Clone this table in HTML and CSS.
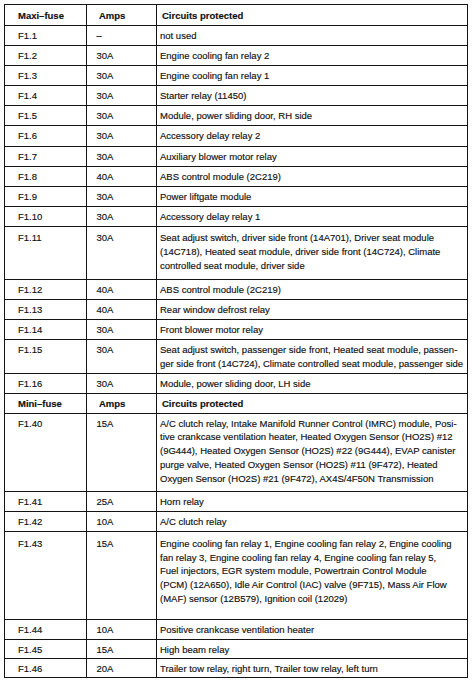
FILE: index.html
```html
<!DOCTYPE html>
<html>
<head>
<meta charset="utf-8">
<link rel="stylesheet" href="styles.css">
</head>
<body>
<table class="fuses">
  <colgroup>
    <col class="c-fuse">
    <col class="c-amps">
    <col class="c-circ">
  </colgroup>
  <tbody>
    <tr class="head"><td>Maxi–fuse</td><td>Amps</td><td>Circuits protected</td></tr>
    <tr><td>F1.1</td><td>–</td><td>not used</td></tr>
    <tr><td>F1.2</td><td>30A</td><td>Engine cooling fan relay 2</td></tr>
    <tr><td>F1.3</td><td>30A</td><td>Engine cooling fan relay 1</td></tr>
    <tr><td>F1.4</td><td>30A</td><td>Starter relay (11450)</td></tr>
    <tr><td>F1.5</td><td>30A</td><td>Module, power sliding door, RH side</td></tr>
    <tr><td>F1.6</td><td>30A</td><td>Accessory delay relay 2</td></tr>
    <tr><td>F1.7</td><td>30A</td><td>Auxiliary blower motor relay</td></tr>
    <tr><td>F1.8</td><td>40A</td><td>ABS control module (2C219)</td></tr>
    <tr><td>F1.9</td><td>30A</td><td>Power liftgate module</td></tr>
    <tr><td>F1.10</td><td>30A</td><td>Accessory delay relay 1</td></tr>
    <tr class="x3"><td>F1.11</td><td>30A</td><td>Seat adjust switch, driver side front (14A701), Driver seat module<br>(14C718), Heated seat module, driver side front (14C724), Climate<br>controlled seat module, driver side</td></tr>
    <tr><td>F1.12</td><td>40A</td><td>ABS control module (2C219)</td></tr>
    <tr><td>F1.13</td><td>40A</td><td>Rear window defrost relay</td></tr>
    <tr><td>F1.14</td><td>30A</td><td>Front blower motor relay</td></tr>
    <tr><td>F1.15</td><td>30A</td><td>Seat adjust switch, passenger side front, Heated seat module, passen-<br>ger side front (14C724), Climate controlled seat module, passenger side</td></tr>
    <tr><td>F1.16</td><td>30A</td><td>Module, power sliding door, LH side</td></tr>
    <tr class="head sub"><td>Mini–fuse</td><td>Amps</td><td>Circuits protected</td></tr>
    <tr class="x5a"><td>F1.40</td><td>15A</td><td>A/C clutch relay, Intake Manifold Runner Control (IMRC) module, Posi-<br>tive crankcase ventilation heater, Heated Oxygen Sensor (HO2S) #12<br>(9G444), Heated Oxygen Sensor (HO2S) #22 (9G444), EVAP canister<br>purge valve, Heated Oxygen Sensor (HO2S) #11 (9F472), Heated<br>Oxygen Sensor (HO2S) #21 (9F472), AX4S/4F50N Transmission</td></tr>
    <tr><td>F1.41</td><td>25A</td><td>Horn relay</td></tr>
    <tr><td>F1.42</td><td>10A</td><td>A/C clutch relay</td></tr>
    <tr class="x5b"><td>F1.43</td><td>15A</td><td>Engine cooling fan relay 1, Engine cooling fan relay 2, Engine cooling<br>fan relay 3, Engine cooling fan relay 4, Engine cooling fan relay 5,<br>Fuel injectors, EGR system module, Powertrain Control Module<br>(PCM) (12A650), Idle Air Control (IAC) valve (9F715), Mass Air Flow<br>(MAF) sensor (12B579), Ignition coil (12029)</td></tr>
    <tr><td>F1.44</td><td>10A</td><td>Positive crankcase ventilation heater</td></tr>
    <tr class="tight"><td>F1.45</td><td>15A</td><td>High beam relay</td></tr>
    <tr class="tight"><td>F1.46</td><td>20A</td><td>Trailer tow relay, right turn, Trailer tow relay, left turn</td></tr>
  </tbody>
</table>
</body>
</html>
```
FILE: styles.css
```css
html, body {
  margin: 0;
  padding: 0;
  background: #ffffff;
}

body {
  padding: 4px 0 0 4px;
  font-family: "Liberation Sans", Arial, sans-serif;
  font-size: 9.5px;
  line-height: 13.8px;
  color: #111111;
}

.fuses {
  border-collapse: collapse;
  width: 462.5px;
  table-layout: fixed;
}

.c-fuse { width: 82px; }
.c-amps { width: 70px; }
.c-circ { width: 310.5px; }

.fuses td {
  border: 1px solid #141414;
  padding: 3px 0 2.3px 0;
  vertical-align: top;
  white-space: nowrap;
  -webkit-text-stroke: 0.15px #111111;
}

.fuses td:nth-child(1) { padding-left: 13px; }
.fuses td:nth-child(2) { padding-left: 9.5px; }
.fuses td:nth-child(3) { padding-left: 3px; }

.head td {
  font-weight: bold;
  padding-top: 3.5px;
  padding-bottom: 2.7px;
}

.head td:nth-child(2) { padding-left: 12px; }
.head td:nth-child(3) { padding-left: 5px; }

.sub td {
  padding-top: 3px;
  padding-bottom: 2.3px;
}

.x3 td { padding-top: 4.5px; padding-bottom: 6px; }
.x5a td { padding-top: 2.5px; padding-bottom: 5px; }
.x5b td { padding-top: 5px; padding-bottom: 13.3px; }
.tight td { padding-top: 2.6px; padding-bottom: 1.3px; }
```
